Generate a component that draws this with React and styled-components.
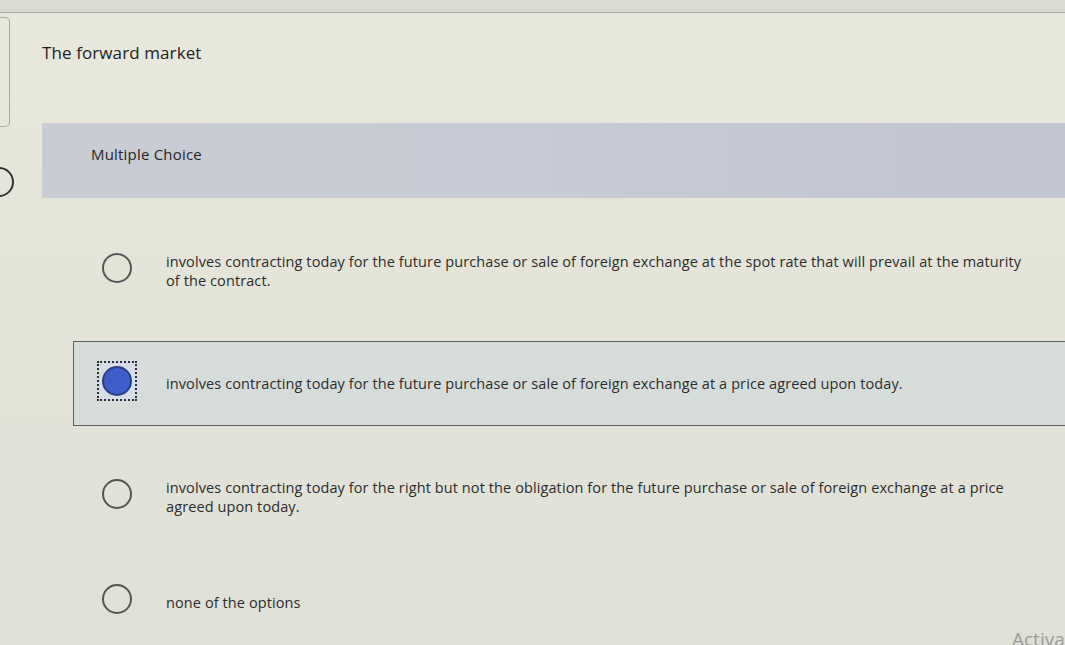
import React from "react";
import styled, { createGlobalStyle } from "styled-components";

const GlobalStyle = createGlobalStyle`
  html, body {
    margin: 0;
    padding: 0;
    background: #e3e3d8;
    font-family: "Open Sans", Lato, "Liberation Sans", sans-serif;
    color: #2b2b2b;
    overflow: hidden;
  }
`;

const choices = [
  {
    text:
      "involves contracting today for the future purchase or sale of foreign exchange at the spot rate that will prevail at the maturity of the contract.",
  },
  {
    text:
      "involves contracting today for the future purchase or sale of foreign exchange at a price agreed upon today.",
    selected: true,
  },
  {
    text:
      "involves contracting today for the right but not the obligation for the future purchase or sale of foreign exchange at a price agreed upon today.",
  },
  { text: "none of the options" },
];

const App = () => {
  return (
    <>
      <GlobalStyle />
      <Page>
        <TopStrip />
        <QuestionRow>
          <Rail />
          <Title>The forward market</Title>
        </QuestionRow>
        <Body>
          <SideColumn>
            <NavCircle />
          </SideColumn>
          <Main>
            <Header>Multiple Choice</Header>
            <ChoiceList>
              {choices.map((c, i) => (
                <Choice key={i} selected={c.selected}>
                  <RadioWrap selected={c.selected}>
                    <Radio selected={c.selected} />
                  </RadioWrap>
                  <ChoiceText>{c.text}</ChoiceText>
                </Choice>
              ))}
            </ChoiceList>
          </Main>
        </Body>
        <Watermark>Activa</Watermark>
      </Page>
    </>
  );
};

const Page = styled.div`
  position: relative;
  width: 1065px;
  height: 645px;
  background: linear-gradient(180deg, #e8e8dd 0%, #e4e4d8 40%, #dfe0d7 100%);
  overflow: hidden;
`;

const TopStrip = styled.div`
  height: 12px;
  background: #d9dad2;
  border-bottom: 1px solid #a8a9a2;
`;

const QuestionRow = styled.div`
  display: flex;
  height: 110px;
`;

const Rail = styled.div`
  width: 9px;
  margin-top: 4px;
  height: 108px;
  border: 1px solid #a9aaa3;
  border-left: none;
  border-radius: 0 5px 5px 0;
`;

const Title = styled.h1`
  margin: 28px 0 0 32px;
  font-size: 17px;
  font-weight: 400;
  color: #222;
  letter-spacing: 0.1px;
`;

const Body = styled.div`
  display: flex;
`;

const SideColumn = styled.div`
  width: 42px;
  flex-shrink: 0;
`;

const NavCircle = styled.div`
  width: 26px;
  height: 26px;
  margin: 44px 0 0 -16px;
  border: 2px solid #333;
  border-radius: 50%;
`;

const Main = styled.div`
  flex: 1;
  display: flex;
  flex-direction: column;
`;

const Header = styled.div`
  height: 75px;
  box-sizing: border-box;
  padding: 21px 0 0 49px;
  font-size: 15px;
  letter-spacing: 0.2px;
  color: #262626;
  background: linear-gradient(90deg, #c9ccd3 0%, #c7cbd5 50%, #c2c5d2 100%);
`;

const ChoiceList = styled.div`
  display: flex;
  flex-direction: column;
  gap: 28px;
  padding: 30px 0 0 31px;
`;

const Choice = styled.div`
  display: flex;
  align-items: center;
  height: 85px;
  box-sizing: border-box;
  padding-left: 23px;
  margin-right: -2px;
  border: 1px solid ${(p) => (p.selected ? "#5d5f5e" : "transparent")};
  background: ${(p) => (p.selected ? "#d6dcd9" : "transparent")};

  &:last-child {
    height: 70px;
  }
`;

const RadioWrap = styled.div`
  width: 40px;
  height: 40px;
  flex-shrink: 0;
  display: flex;
  align-items: center;
  justify-content: center;
  box-sizing: border-box;
  margin-top: -6px;
  border: 2px dotted ${(p) => (p.selected ? "#2c2c3a" : "transparent")};
  background: ${(p) => (p.selected ? "#d7dde6" : "transparent")};
`;

const Radio = styled.div`
  width: 30px;
  height: 30px;
  box-sizing: border-box;
  border-radius: 50%;
  border: 2px solid ${(p) => (p.selected ? "#2b3f86" : "#555")};
  background: ${(p) => (p.selected ? "#3b5ecb" : "transparent")};
`;

const ChoiceText = styled.p`
  margin: 0 0 0 29px;
  max-width: 862px;
  font-size: 14.5px;
  line-height: 19px;
  letter-spacing: 0.1px;
  color: #2d2d2d;
`;

const Watermark = styled.div`
  position: absolute;
  left: 1012px;
  bottom: -7px;
  font-size: 19px;
  color: #9a9c98;
  white-space: nowrap;
`;

export default App;
